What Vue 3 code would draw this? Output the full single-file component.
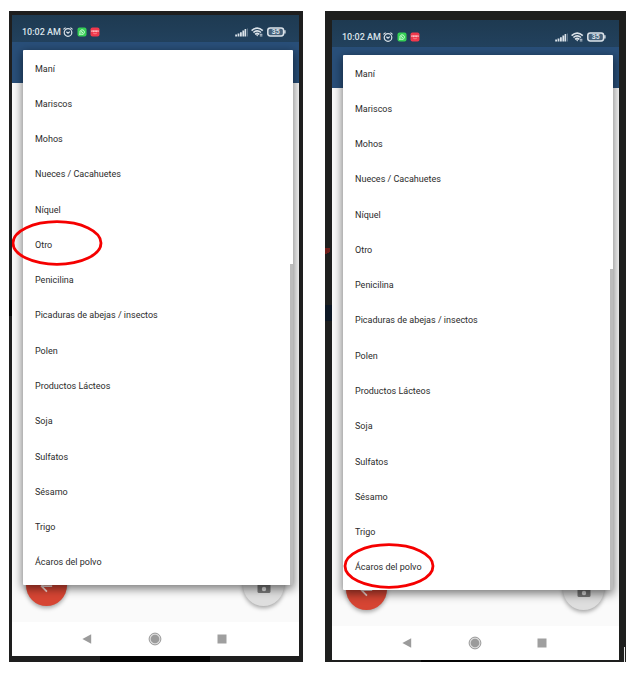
<script setup>
const items = [
  'Maní',
  'Mariscos',
  'Mohos',
  'Nueces / Cacahuetes',
  'Níquel',
  'Otro',
  'Penicilina',
  'Picaduras de abejas / insectos',
  'Polen',
  'Productos Lácteos',
  'Soja',
  'Sulfatos',
  'Sésamo',
  'Trigo',
  'Ácaros del polvo',
]

const phones = [
  { id: 'first', marked: 'Otro' },
  { id: 'second', marked: 'Ácaros del polvo' },
]
</script>

<template>
  <main class="page">
    <section v-for="phone in phones" :key="phone.id" class="frame" :class="phone.id">
      <div class="screen">
        <header class="status">
          <span class="clock">10:02 AM</span>
          <svg class="alarm" viewBox="0 0 10 10" width="10" height="10" aria-hidden="true">
            <circle cx="5" cy="5.5" r="3.8" />
            <path d="M0.4 2.4 2.6 0.6M9.6 2.4 7.4 0.6M3.4 4.8 5 6.2 6.8 4.6" />
          </svg>
          <svg class="chat" viewBox="0 0 10 10" width="10" height="10" aria-hidden="true">
            <rect x="0.5" y="0.5" width="9" height="9" rx="2" fill="#35cf55" />
            <path d="M2.5 7.6 3 5.9A2.3 2.3 0 1 1 4 7.1Z" fill="#4bd769" stroke="#e4ffe9" stroke-width="0.8" />
            <path d="M4.2 4.1Q4.5 5.5 6 5.8" fill="none" stroke="#e4ffe9" stroke-width="0.8" />
          </svg>
          <svg class="shop" viewBox="0 0 10 10" width="10" height="10" aria-hidden="true">
            <rect x="0.5" y="0.5" width="9" height="9" rx="2" fill="#f0384c" />
            <path d="M1.4 3.3H8.6V5H1.4Z" fill="#ffc5c9" />
            <path d="M2 4.1H3M3.8 4.1H4.7M5.5 4.1H6.3M7 4.1H8" stroke="#f0384c" stroke-width="0.7" />
            <path d="M3 6Q5 7.8 7 6" fill="none" stroke="#ff8d94" stroke-width="0.8" />
          </svg>
          <span class="spacer"></span>
          <svg viewBox="0 0 13 9" width="13" height="9" aria-hidden="true">
            <path d="M0.2 6.6H2V8.6H0.2ZM2.6 5.6H4.4V8.6H2.6ZM5 4.2H6.8V8.6H5ZM7.4 2.6H9.2V8.6H7.4ZM9.6 1H11.2V8.6H9.6Z" fill="#dbe3ea" />
            <path d="M12 0.5H12.8V8.6H12Z" fill="#71869a" />
          </svg>
          <svg class="wifi" viewBox="0 0 13 10" width="13" height="10" aria-hidden="true">
            <path d="M0.6 3.6Q6.2 -1.3 11.8 3.6M2.4 5.5Q6.2 2.4 10 5.5M4.1 7.3Q6.2 5.6 8.3 7.3" fill="none" stroke="#dbe3ea" stroke-width="1.6" />
            <path d="M4.9 7.6H7.5L6.2 9.4Z" fill="#dbe3ea" />
            <path d="M8.8 7.3H11.4M8.8 8.9H11.4" stroke="#dbe3ea" stroke-width="0.9" />
          </svg>
          <svg class="battery" viewBox="0 0 19 10" width="19" height="10" aria-hidden="true">
            <rect x="0.8" y="0.9" width="15.8" height="8" rx="2.4" fill="#456079" stroke="#dbe3ea" stroke-width="1.5" />
            <path d="M17.2 3.2H18.6V6.6H17.2Z" fill="#dbe3ea" />
            <text x="8.7" y="7.4" text-anchor="middle">35</text>
          </svg>
        </header>
        <div class="appbar"></div>
        <div class="content">
          <button class="fab back" type="button" aria-label="Volver">
            <svg viewBox="0 0 24 24" width="17" height="17" aria-hidden="true">
              <path d="M20 13H5M12 5 5 13 12.6 20.6" fill="none" stroke="#f7dcd8" stroke-width="2.4" />
            </svg>
          </button>
          <button class="fab save" type="button" aria-label="Guardar">
            <svg viewBox="0 0 14 14" width="14" height="14" aria-hidden="true">
              <path d="M1.5 0H10.5L13.5 3V12.5Q13.5 14 12 14H2Q0.5 14 0.5 12.5V1.5Z" fill="#777" />
              <circle cx="7" cy="10" r="2.2" fill="#ddd" />
              <path d="M2.5 2H9V4.5H2.5Z" fill="#ddd" />
            </svg>
          </button>
        </div>
        <nav class="keys">
          <button type="button" aria-label="Atrás">
            <svg viewBox="0 0 14 14" width="14" height="14" aria-hidden="true">
              <path d="M2.4 7 11.2 2.2V11.8Z" fill="#9b9b9b" />
            </svg>
          </button>
          <button type="button" aria-label="Inicio">
            <svg viewBox="0 0 14 14" width="14" height="14" aria-hidden="true">
              <circle cx="7" cy="7" r="5.9" fill="#dcdcdc" stroke="#9b9b9b" stroke-width="1" />
              <circle cx="7" cy="7" r="4.3" fill="#9b9b9b" />
            </svg>
          </button>
          <button type="button" aria-label="Recientes">
            <svg viewBox="0 0 14 14" width="14" height="14" aria-hidden="true">
              <rect x="2.5" y="2.5" width="9" height="9" fill="#9f9f9f" />
            </svg>
          </button>
        </nav>
        <div class="menu">
          <ul class="options">
            <li v-for="item in items" :key="item">
              <button type="button" class="option">{{ item }}</button>
              <svg v-if="item === phone.marked" class="mark" viewBox="0 0 92 46" width="92" height="46" aria-hidden="true">
                <ellipse cx="46" cy="23" rx="44" ry="21.3" />
              </svg>
            </li>
          </ul>
          <span class="thumb"></span>
        </div>
      </div>
    </section>
  </main>
</template>

<style>
body {
  background: #fff;
}
</style>

<style scoped>
.page {
  display: grid;
  grid-template-columns: 294fr 301fr;
  gap: 22px;
  padding: 11px 9px 13px;
  font-family: Roboto, "Liberation Sans", sans-serif;
}

.frame {
  background: #1e1e1e;
}

.first {
  padding: 4px 4px 6px 3px;
  background:
    linear-gradient(#050505, #050505) 91px 100% / 110px 6px no-repeat,
    linear-gradient(#050505, #050505) 0 289px / 3px 16px no-repeat,
    #1e1e1e;
}

.second {
  padding: 9px 7px 2px;
  background:
    linear-gradient(#e8e8e8, #e8e8e8) calc(100% - 1px) 100% / 1px 15px no-repeat,
    linear-gradient(#050505, #050505) 96px 100% / 109px 2px no-repeat,
    linear-gradient(#0d1825, #0d1825) 0 294px / 7px 16px no-repeat,
    linear-gradient(150deg, #6f1f1b 60%, #1e1e1e 61%) 0 237px / 5px 8px no-repeat,
    #1e1f1e;
}

.screen {
  position: relative;
  display: flex;
  flex-direction: column;
  overflow: hidden;
  background: #fafafa;
}

.status {
  display: flex;
  align-items: center;
  box-sizing: border-box;
  height: 27px;
  padding: 7px 13px 0 10px;
  background: linear-gradient(#1e3a51, #22415d);
  color: #dbe3ea;
}

.clock {
  margin-right: 2px;
  font-size: 9px;
  font-weight: 500;
  line-height: 12px;
}

.alarm {
  fill: none;
  stroke: #dbe3ea;
  stroke-width: 1.2;
}

.chat {
  margin-left: 4px;
}

.shop {
  margin-left: 3px;
}

.spacer {
  flex: 1;
}

.wifi {
  margin-left: 3px;
}

.battery {
  margin-left: 3px;
}

.battery text {
  fill: #dbe3ea;
  font-size: 7px;
  font-weight: 700;
}

.appbar {
  height: 41px;
  background: #294f79;
}

.content {
  display: flex;
  align-items: flex-end;
  justify-content: space-between;
  box-sizing: border-box;
  min-height: 538px;
  padding: 0 15px 16px 14px;
}

.first .content {
  min-height: 539px;
}

.fab {
  display: grid;
  place-items: center;
  width: 41px;
  height: 41px;
  padding: 0;
  border: 0;
  border-radius: 50%;
  box-shadow: 0 2px 4px rgba(0, 0, 0, 0.35);
}

.back {
  background: #d64533;
}

.save {
  background: #dedede;
}

.keys {
  display: flex;
  align-items: center;
  justify-content: space-between;
  height: 34px;
  padding: 0 70px 0 68px;
  background: #fff;
}

.keys button {
  display: flex;
  padding: 0;
  border: 0;
  background: none;
}

.menu {
  position: absolute;
  top: 35px;
  right: 6px;
  left: 11px;
  padding: 1px 0 5px;
  border-radius: 1px;
  background: #fff;
  box-shadow: 0 3px 10px 1px rgba(0, 0, 0, 0.5);
}

.options {
  display: grid;
  grid-auto-rows: minmax(35px, 1fr);
  min-height: 529px;
  margin: 0;
  padding: 0;
  list-style: none;
}

.options li {
  position: relative;
  display: flex;
}

.option {
  flex: 1;
  padding: 0 12px;
  border: 0;
  background: none;
  color: #2b2b2b;
  font-family: inherit;
  font-size: 9px;
  line-height: 12px;
  text-align: left;
}

.mark {
  position: absolute;
  top: -7px;
  left: -12px;
  z-index: 1;
  fill: none;
  stroke: #f50000;
  stroke-width: 2.8;
}

.second .mark {
  left: 0;
}

.thumb {
  position: absolute;
  top: 214px;
  right: 0;
  bottom: 0;
  width: 3px;
  background: #bcbcbc;
}
</style>
